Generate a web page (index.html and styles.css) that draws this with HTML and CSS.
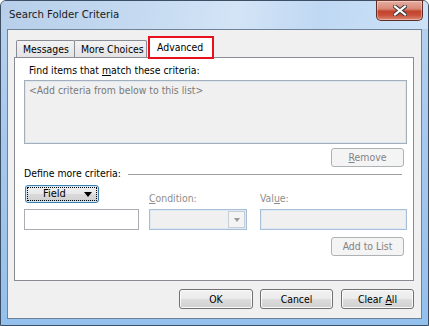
FILE: index.html
```html
<!DOCTYPE html>
<html>
<head>
<meta charset="utf-8">
<link rel="stylesheet" href="styles.css">
</head>
<body>
<div class="window">
  <div class="titlebar">
    <span class="title">Search Folder Criteria</span>
    <div class="close">
      <svg width="14" height="11" viewBox="0 0 14 11">
        <path d="M2 1.5 L12 9.5 M12 1.5 L2 9.5" stroke="#3b3b3b" stroke-width="4.2" stroke-linecap="square" fill="none"/>
        <path d="M2 1.5 L12 9.5 M12 1.5 L2 9.5" stroke="#ffffff" stroke-width="2.2" stroke-linecap="square" fill="none"/>
      </svg>
    </div>
  </div>
  <div class="client">
    <div class="tabs">
      <div class="tab">Messages</div>
      <div class="tab">More Choices</div>
      <div class="tab active">Advanced</div>
    </div>
    <div class="panel">
      <div class="lbl find">Find items that <u>m</u>atch these criteria:</div>
      <div class="listbox">&lt;Add criteria from below to this list&gt;</div>
      <div class="row-right"><div class="btn disabled small"><u>R</u>emove</div></div>
      <div class="define"><span>Define more criteria:</span><span class="rule"></span></div>
      <div class="fieldgrid">
        <div class="fieldbtn"><div class="focus"><span class="ftext">Field</span><span class="tri"></span></div></div>
        <div class="lbl dis"><u>C</u>ondition:</div>
        <div class="lbl dis">Val<u>u</u>e:</div>
        <div class="input"></div>
        <div class="combo"><span class="drop"><span class="tri gray"></span></span></div>
        <div class="input dis"></div>
      </div>
      <div class="row-right add"><div class="btn disabled small">Add to List</div></div>
    </div>
    <div class="footer">
      <div class="btn ok">OK</div>
      <div class="btn cancel">Cancel</div>
      <div class="btn clear">Clear <u>A</u>ll</div>
    </div>
  </div>
</div>
</body>
</html>
```
FILE: styles.css
```css
html, body {
  margin: 0;
  padding: 0;
  width: 429px;
  height: 326px;
  overflow: hidden;
  background: #ffffff;
}
body {
  font-family: "DejaVu Sans Condensed", "DejaVu Sans", sans-serif;
  font-size: 10.4px;
  color: #000;
}
u { text-decoration: underline; text-underline-offset: 1px; }

.window {
  box-sizing: border-box;
  width: 429px;
  height: 326px;
  border: 1px solid #3d4f64;
  border-radius: 6px 6px 0 0;
  background: linear-gradient(to bottom, #b9d2ed 0px, #a9c9ee 120px, #9cc3ec 250px, #93c0ee 326px);
  display: flex;
  flex-direction: column;
  padding: 0 6px 7px 6px;
}

.titlebar {
  height: 28px;
  margin: 0 -6px;
  padding: 0 5px 0 8px;
  display: flex;
  justify-content: space-between;
  align-items: flex-start;
  background: linear-gradient(100deg, #b7cfea 0%, #c6dbf1 35%, #d3e4f6 55%, #bfd8f3 75%, #cde2f7 100%);
  border-radius: 5px 5px 0 0;
}
.title {
  font-size: 11.3px;
  line-height: 28px;
  color: #1b1b1b;
}
.close {
  width: 45px;
  height: 19px;
  margin-top: -1px;
  border: 1px solid #5d2e27;
  border-top-color: #6b3a32;
  border-radius: 0 0 5px 5px;
  background: linear-gradient(to bottom, #e7ada1 0%, #d88a79 40%, #c4432c 55%, #c9503a 75%, #dd8a73 100%);
  box-shadow: inset 0 0 0 1px rgba(255,255,255,0.35);
  display: flex;
  align-items: center;
  justify-content: center;
}

.client {
  flex: 1;
  border: 1px solid #6f8297;
  background: #f0f0f0;
  padding: 6px 7px 9px 6px;
  display: flex;
  flex-direction: column;
}

.tabs {
  height: 21px;
  display: flex;
  align-items: flex-end;
  padding-left: 2px;
}
.tab {
  box-sizing: border-box;
  height: 17px;
  border: 1px solid #898c95;
  border-bottom: none;
  border-radius: 2px 2px 0 0;
  background: linear-gradient(to bottom, #f3f3f3, #e3e3e3);
  padding: 0 0 0 6px;
  line-height: 16px;
  margin-right: -1px;
  white-space: nowrap;
}
.tab:nth-child(1) { width: 59px; }
.tab:nth-child(2) { width: 73px; }
.tab.active {
  position: relative;
  z-index: 1;
  width: 66px;
  height: 23px;
  margin-left: 2px;
  margin-bottom: -2px;
  border: 2px solid #e8101a;
  border-radius: 0;
  background: #ffffff;
  padding: 0 0 0 7px;
  line-height: 19px;
}

.panel {
  box-sizing: border-box;
  height: 224px;
  border: 1px solid #898c95;
  background: #ffffff;
  padding: 6px 6px 0 9px;
  display: flex;
  flex-direction: column;
}
.lbl { line-height: 13px; height: 13px; white-space: nowrap; }
.find { margin-left: 5px; }
.listbox {
  box-sizing: border-box;
  height: 64px;
  margin-top: 3px;
  border: 1px solid #a4aeba;
  box-shadow: inset 0 0 0 1px #dde7f1;
  background: #f0f0f0;
  color: #7a7a7a;
  padding: 2px 0 0 4px;
  line-height: 14px;
  white-space: nowrap;
}
.row-right {
  display: flex;
  justify-content: flex-end;
  padding-right: 3px;
  margin-top: 4px;
}
.row-right.add { margin-top: 7px; }

.btn {
  box-sizing: border-box;
  height: 20px;
  border: 1px solid #707070;
  border-radius: 3px;
  background: linear-gradient(to bottom, #f2f2f2 0%, #ebebeb 50%, #dddddd 51%, #cfcfcf 100%);
  box-shadow: inset 0 0 0 1px #fbfbfb;
  text-align: center;
  line-height: 18px;
  white-space: nowrap;
}
.btn.small { width: 73px; height: 19px; line-height: 17px; }
.btn.disabled {
  border-color: #adb2b5;
  background: #f4f4f4;
  box-shadow: none;
  color: #838383;
}

.define {
  display: flex;
  align-items: center;
  height: 13px;
  line-height: 13px;
  padding-right: 5px;
  white-space: nowrap;
}
.define .rule {
  flex: 1;
  height: 1px;
  background: #a0a0a0;
  margin-left: 7px;
  margin-top: 1px;
}

.fieldgrid {
  margin-top: 5px;
  display: grid;
  grid-template-columns: 115px 98px 150px;
  column-gap: 10px;
  grid-template-rows: 20px 21px;
  row-gap: 4px;
}
.fieldgrid > :nth-child(3) { margin-left: 3px; }
.fieldgrid > :nth-child(6) { margin-left: 3px; }
.fieldgrid .lbl { align-self: end; }
.dis { color: #8d8d8d; }

.fieldbtn {
  box-sizing: border-box;
  width: 74px;
  height: 18px;
  margin-left: 1px;
  align-self: start;
  border: 1px solid #3c7fb1;
  border-radius: 3px;
  background: linear-gradient(to bottom, #f0f0f0 0%, #e8e8e8 50%, #dadada 51%, #d0d0d0 100%);
  box-shadow: inset 0 0 0 1px #cfe6f6;
  padding: 1px;
}
.focus {
  box-sizing: border-box;
  height: 14px;
  border: 1px dotted #000;
  display: flex;
  align-items: center;
  padding-left: 15px;
}
.ftext { line-height: 12px; font-size: 11px; }
.tri {
  width: 0;
  height: 0;
  border-left: 4.5px solid transparent;
  border-right: 4.5px solid transparent;
  border-top: 5px solid #000;
  margin-left: auto;
  margin-right: 4px;
}
.tri.gray { border-top: 4px solid #9a9a9a; border-left-width: 3.5px; border-right-width: 3.5px; margin: 0; }

.input {
  box-sizing: border-box;
  height: 21px;
  border: 1px solid #abadb3;
  background: #ffffff;
}
.input.dis {
  border-color: #a7bfd9;
  box-shadow: inset 0 0 0 1px #dfe9f4;
  background: #f0f0f0;
}
.combo {
  box-sizing: border-box;
  height: 21px;
  border: 1px solid #a7bfd9;
  box-shadow: inset 0 0 0 1px #dfe9f4;
  background: #f0f0f0;
  display: flex;
  justify-content: flex-end;
  padding: 1px;
}
.drop {
  box-sizing: border-box;
  width: 17px;
  border: 1px solid #c5cdd6;
  background: #f4f4f4;
  display: flex;
  align-items: center;
  justify-content: center;
}

.footer {
  margin-top: 8px;
  display: flex;
  justify-content: flex-end;
}
.footer .btn { height: 20px; }
.ok { width: 74px; }
.cancel { width: 73px; margin-left: 7px; }
.clear { width: 73px; margin-left: 8px; }
```
